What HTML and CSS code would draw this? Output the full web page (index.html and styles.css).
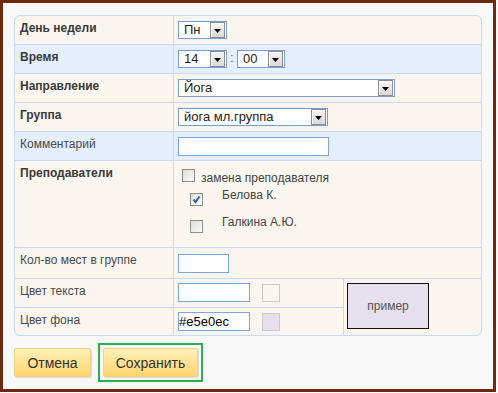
FILE: index.html
```html
<!DOCTYPE html>
<html lang="ru">
<head>
<meta charset="utf-8">
<title>Занятие</title>
<link rel="stylesheet" href="styles.css">
</head>
<body>
<div class="frame">
  <div class="form">
    <div class="lbl b">День недели</div>
    <div class="val wide">
      <div class="sel w49"><span class="txt">Пн</span><span class="arrow"><svg width="7" height="4" viewBox="0 0 7 4"><path d="M0 0H7L3.5 4Z" fill="#000"/></svg></span></div>
    </div>

    <div class="lbl b alt">Время</div>
    <div class="val wide alt">
      <div class="sel w49"><span class="txt">14</span><span class="arrow"><svg width="7" height="4" viewBox="0 0 7 4"><path d="M0 0H7L3.5 4Z" fill="#000"/></svg></span></div>
      <span class="colon">:</span>
      <div class="sel w48"><span class="txt">00</span><span class="arrow"><svg width="7" height="4" viewBox="0 0 7 4"><path d="M0 0H7L3.5 4Z" fill="#000"/></svg></span></div>
    </div>

    <div class="lbl b">Направление</div>
    <div class="val wide">
      <div class="sel w217"><span class="txt">Йога</span><span class="arrow"><svg width="7" height="4" viewBox="0 0 7 4"><path d="M0 0H7L3.5 4Z" fill="#000"/></svg></span></div>
    </div>

    <div class="lbl b">Группа</div>
    <div class="val wide">
      <div class="sel w150"><span class="txt">йога мл.группа</span><span class="arrow"><svg width="7" height="4" viewBox="0 0 7 4"><path d="M0 0H7L3.5 4Z" fill="#000"/></svg></span></div>
    </div>

    <div class="lbl alt">Комментарий</div>
    <div class="val wide alt">
      <div class="inp w151"></div>
    </div>

    <div class="lbl b">Преподаватели</div>
    <div class="val wide teachers">
      <div class="line1">
        <span class="cb"></span><span class="cbtext">замена преподавателя</span>
      </div>
      <div class="list">
        <div class="item"><span class="cb checked"><svg width="11" height="11" viewBox="0 0 11 11"><path d="M2.5 5.5L4.5 8L8.5 2.5" fill="none" stroke="#3b58a8" stroke-width="2"/></svg></span><span class="itext">Белова К.</span></div>
        <div class="item"><span class="cb"></span><span class="itext">Галкина А.Ю.</span></div>
      </div>
    </div>

    <div class="lbl">Кол-во мест в группе</div>
    <div class="val wide pt6">
      <div class="inp w51"></div>
    </div>

    <div class="lbl">Цвет текста</div>
    <div class="val colorval">
      <div class="inp w72"></div>
      <span class="swatch"></span>
    </div>
    <div class="preview-cell">
      <div class="preview">пример</div>
    </div>

    <div class="lbl">Цвет фона</div>
    <div class="val colorval">
      <div class="inp w72 hex">#e5e0ec</div>
      <span class="swatch filled"></span>
    </div>
  </div>

  <div class="actions">
    <button class="btn cancel">Отмена</button>
    <span class="save-wrap"><button class="btn save">Сохранить</button></span>
  </div>
</div>
</body>
</html>
```

FILE: styles.css
```css
html, body {
  margin: 0;
  padding: 0;
  background: #f8f8f8;
}

body {
  font-family: "Liberation Sans", Arial, sans-serif;
  font-size: 12px;
  color: #444;
}

.frame {
  box-sizing: border-box;
  width: 496px;
  height: 392px;
  border: 3px solid #6b2a0e;
  background: #f8f8f8;
  padding: 12px 11px;
}

.form {
  display: grid;
  grid-template-columns: 158px 169px 1fr;
  grid-template-rows: 28px 28px 28px 28px 28px 86px 30px 28px 27px;
  gap: 1px;
  background: #c8daf6;
  border: 1px solid #c8daf6;
  border-radius: 6px;
  overflow: hidden;
}

.lbl {
  grid-column: 1;
  background: #faf6ef;
  padding: 5px 5px 0 5px;
  line-height: 14px;
  color: #4a4a4a;
}

.lbl.b {
  font-weight: bold;
  color: #3a3a3a;
}

.val {
  background: #faf6ef;
  padding: 5px 0 0 4px;
  display: flex;
  align-items: flex-start;
}

.val.wide {
  grid-column: 2 / 4;
}

.val.colorval {
  grid-column: 2;
  padding-top: 4px;
}

.val.pt6 {
  padding-top: 6px;
}

.alt {
  background: #e4eefd;
}

.sel {
  box-sizing: border-box;
  height: 18px;
  border: 1px solid #7b9ed6;
  background: #fff;
  display: flex;
  align-items: stretch;
  font-size: 13px;
  color: #2a1a14;
}

.sel .txt {
  flex: 1;
  padding-left: 5px;
  line-height: 16px;
  white-space: nowrap;
  overflow: hidden;
}

.sel .arrow {
  box-sizing: border-box;
  width: 15px;
  margin: 0 1px 0 0;
  border: 1px solid #8c8c8c;
  background: linear-gradient(#f6f6f6, #d9d9d9);
  display: flex;
  align-items: center;
  justify-content: center;
  box-shadow: inset 1px 1px 0 #fff;
}

.sel .arrow svg {
  display: block;
  margin-top: 2px;
}

.w49 { width: 49px; }
.w48 { width: 48px; }
.w217 { width: 217px; }
.w150 { width: 150px; }

.colon {
  width: 10px;
  text-align: center;
  color: #9a5a3a;
  font-size: 12px;
  line-height: 16px;
}

.inp {
  box-sizing: border-box;
  height: 19px;
  border: 1px solid #7ea4de;
  background: #fff;
}

.w151 { width: 151px; }
.w51 { width: 51px; }
.w72 { width: 72px; }

.inp.hex {
  font-size: 13px;
  color: #000;
  line-height: 17px;
  padding-left: 0;
}

.swatch {
  box-sizing: border-box;
  width: 18px;
  height: 18px;
  margin: 1px 0 0 12px;
  border: 1px solid #cacaca;
}

.swatch.filled {
  background: #e5e0ec;
}

.preview-cell {
  grid-column: 3;
  grid-row: span 2;
  background: #faf6ef;
  padding: 4px 0 0 3px;
}

.preview {
  box-sizing: border-box;
  width: 82px;
  height: 46px;
  border: 1px solid #111;
  background: #e5e0ec;
  color: #555;
  font-size: 12px;
  display: flex;
  align-items: center;
  justify-content: center;
}

.teachers {
  display: block;
  padding: 8px 0 0 8px;
}

.line1 {
  display: flex;
  align-items: flex-start;
}

.cb {
  box-sizing: border-box;
  width: 13px;
  height: 13px;
  border: 1px solid #8e8f8f;
  background: linear-gradient(135deg, #dcdcd6, #fbfbfb);
  display: flex;
  align-items: center;
  justify-content: center;
  flex: none;
}

.cb svg {
  display: block;
}

.cbtext {
  margin-left: 6px;
  margin-top: 2px;
  line-height: 14px;
  color: #444;
}

.list {
  margin: 3px 0 0 8px;
}

.item {
  display: flex;
  align-items: flex-start;
  height: 27px;
}

.item .cb {
  margin-top: 5px;
}

.itext {
  margin-left: 19px;
  line-height: 14px;
  color: #444;
}

.actions {
  display: flex;
  align-items: flex-start;
  gap: 12px;
  margin-top: 12px;
}

.btn {
  box-sizing: border-box;
  height: 29px;
  border: 1px solid #efd187;
  border-radius: 2px;
  background: linear-gradient(#fff0bb, #fdd56c);
  box-shadow: 1px 1px 1px rgba(0, 0, 0, 0.12);
  font-family: "Liberation Sans", Arial, sans-serif;
  font-size: 14px;
  color: #333;
  padding: 0;
  margin: 0;
  display: block;
}

.btn.cancel {
  width: 77px;
}

.save-wrap {
  display: block;
  margin: -5px;
  padding: 3px;
  border: 2px solid #2fae4c;
}

.btn.save {
  width: 95px;
}
```
